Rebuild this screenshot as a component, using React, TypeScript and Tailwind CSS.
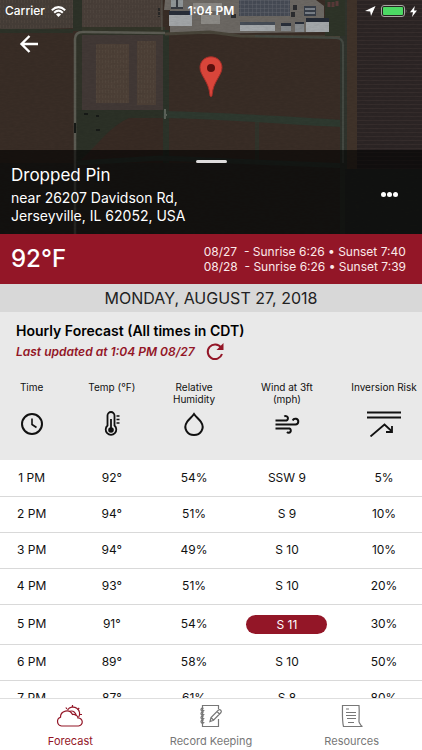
import type { ReactNode } from "react";

type Hour = {
  time: string;
  temp: string;
  humidity: string;
  wind: string;
  risk: string;
  alert?: boolean;
};

const hours: Hour[] = [
  { time: "1 PM", temp: "92°", humidity: "54%", wind: "SSW 9", risk: "5%" },
  { time: "2 PM", temp: "94°", humidity: "51%", wind: "S 9", risk: "10%" },
  { time: "3 PM", temp: "94°", humidity: "49%", wind: "S 10", risk: "10%" },
  { time: "4 PM", temp: "93°", humidity: "51%", wind: "S 10", risk: "20%" },
  { time: "5 PM", temp: "91°", humidity: "54%", wind: "S 11", risk: "30%", alert: true },
  { time: "6 PM", temp: "89°", humidity: "58%", wind: "S 10", risk: "50%" },
  { time: "7 PM", temp: "87°", humidity: "61%", wind: "S 8", risk: "80%" },
];

function FieldMap() {
  return (
    <svg
      className="absolute inset-0 h-full w-full"
      viewBox="0 0 422 234"
      preserveAspectRatio="xMidYMid slice"
      aria-hidden="true"
    >
      <defs>
        <pattern id="rows" width="8" height="4" patternUnits="userSpaceOnUse">
          <path d="M0 .5H8" stroke="#463b38" strokeWidth="1" opacity=".35" />
        </pattern>
        <pattern id="stubble" width="3" height="5" patternUnits="userSpaceOnUse">
          <path d="M.5 0V3" stroke="#5b5048" strokeWidth="1" opacity=".3" />
        </pattern>
        <pattern id="roof" width="4" height="4" patternUnits="userSpaceOnUse">
          <path d="M0 0H4M0 0V4" stroke="#60646b" strokeWidth="1" />
        </pattern>
        <filter id="grain" x="0" y="0" width="100%" height="100%">
          <feTurbulence type="fractalNoise" baseFrequency=".2 .6" numOctaves="3" seed="4" />
          <feColorMatrix values="0 0 0 0 0  0 0 0 0 0  0 0 0 0 0  .7 0 0 0 -.2" />
        </filter>
      </defs>
      <rect width="422" height="234" fill="#392d26" />
      <path d="M0 0H73V28L0 30Z" fill="#463e38" />
      <path d="M0 0H73V28L0 30Z" fill="url(#stubble)" />
      <path d="M73 0H82V31H73ZM0 29H73V33H0Z" fill="#2d3228" />
      <rect x="82" y="0" width="80" height="27" fill="#493f39" />
      <rect x="82" y="0" width="80" height="27" fill="url(#stubble)" />
      <path d="M82 27H165V33H82Z" fill="#333529" />
      <rect x="76" y="33" width="92" height="84" fill="#313329" />
      <rect x="82" y="35" width="81" height="76" fill="#423936" />
      <rect x="96" y="44" width="33" height="59" fill="#4d4037" />
      <rect x="137" y="41" width="19" height="64" fill="#4d4037" />
      <rect x="96" y="44" width="33" height="59" fill="url(#stubble)" />
      <rect x="137" y="41" width="19" height="64" fill="url(#stubble)" />
      <path d="M76 110H168V234H76Z" fill="#2c3127" />
      <path d="M91 150C105 136 112 126 129 118H163V163H78Z" fill="#382b24" />
      <path d="M163 30H169V234H163Z" fill="#2c3329" />
      <path d="M163 111C210 112 300 117 343 120V127C280 124 220 119 163 118Z" fill="#2e392f" />
      <path d="M255 122H259V234H255Z" fill="#31342b" />
      <path d="M0 163H422V234H0Z" fill="#302c27" />
      <path d="M77 163L160 158 422 169" fill="none" stroke="#303831" strokeWidth="5" />
      <path d="M340 0H348V234H340Z" fill="#30342d" />
      <rect x="347" width="10" height="234" fill="#40332a" />
      <rect x="357" width="65" height="234" fill="#2c2525" />
      <rect x="357" width="65" height="234" fill="url(#rows)" />
      <path d="M345 169H422V234H345Z" fill="#2b2d2a" />
      <path d="M165 0H316L324 6V32L170 34V10H164Z" fill="#6c6863" />
      <path d="M165 34L210 32 240 36 340 37" fill="none" stroke="#484439" strokeWidth="3" />
      <rect x="325" width="20" height="36" fill="#2e3428" />
      <path d="M329 2V7M333 2V7M337 1V6" stroke="#593a39" strokeWidth="3" />
      <rect x="171" y="0" width="12" height="8" fill="#8e9496" />
      <path d="M171 8H183M177 0V8" stroke="#373b42" strokeWidth="2" />
      <rect x="169" y="11" width="23" height="15" fill="#a3a6a8" />
      <path d="M169 11H192V15H169Z" fill="#292e39" />
      <rect x="239" y="-2" width="51" height="18" fill="#464b55" />
      <rect x="239" y="-2" width="51" height="18" fill="url(#roof)" />
      <rect x="193" y="3" width="29" height="8" fill="#8b8985" />
      <rect x="201" y="15" width="19" height="9" fill="#8d8b87" />
      <path d="M240 22H275V31H240Z" fill="#a3a7aa" />
      <path d="M240 22H275V25H240Z" fill="#464d57" />
      <path d="M281 23H291V31H281ZM295 22H304V32H295Z" fill="#84888b" />
      <path d="M281 23H291V26H281ZM295 22H304V24H295Z" fill="#292f3a" />
      <path d="M304 6H316V16H304Z" fill="#383e48" />
      <path d="M305 9H315M305 13H315" stroke="#90979d" strokeWidth="1.5" />
      <path d="M306 18H329V32H306Z" fill="#a3a7aa" />
      <path d="M306 18H329V22H306Z" fill="#252b36" />
      <path d="M231 14H236V18H231ZM293 5H297V10H293ZM291 12H295V17H291Z" fill="#2c2d30" />
      <path d="M75 234V39Q75 32 83 32L165 33" fill="none" stroke="#5c5c53" strokeWidth="2.5" />
      <path d="M162 0V30" stroke="#5a5951" strokeWidth="1" />
      <path d="M164 115H167M165 109V119" stroke="#5b6259" strokeWidth="2" />
      <path d="M255 36L336 38Q343 38 343 45V163" fill="none" stroke="#444942" strokeWidth="2" />
      <path d="M75 123V133M84 114H88M96 116H99M96 130H100" stroke="#171a17" strokeWidth="2" />
      <path d="M159 8V17" stroke="#292827" strokeWidth="2" strokeDasharray="3 1" />
      <rect width="422" height="234" filter="url(#grain)" opacity=".15" />
    </svg>
  );
}

function PinIcon() {
  return (
    <svg className="absolute top-14 left-1/2 h-[42px] w-6 -translate-x-1/2" viewBox="0 0 24 42" aria-hidden="true">
      <path
        d="M12 .8C5.800 .8 1 5.500 1 11.600C1 15.600 3 18.600 5.500 23C8.500 28.500 10.200 32 10.800 38.500C11 41.500 13 41.500 13.200 38.500C13.800 32 15.500 28.500 18.500 23C21 18.600 23 15.600 23 11.600C23 5.500 18.200 .8 12 .8Z"
        fill="#d8453a"
        stroke="#a52e28"
      />
      <circle cx="12" cy="12" r="4" fill="#5a100e" />
    </svg>
  );
}

function StatusBar() {
  return (
    <div className="grid h-[22px] grid-cols-3 items-center px-[5px] text-xs font-medium">
      <div className="flex items-center gap-[6px]">
        <span>Carrier</span>
        <svg className="h-[11px] w-[15px]" viewBox="0 0 15 11" aria-hidden="true">
          <g fill="none" stroke="currentColor" strokeWidth="2">
            <path d="M.8 4.200Q7.500-2 14.200 4.200" />
            <path d="M3.200 6.700Q7.500 2.600 11.800 6.700" />
          </g>
          <path d="M5 8.400Q7.500 6.200 10 8.400L7.500 11Z" fill="currentColor" />
        </svg>
      </div>
      <span className="text-center font-semibold">1:04 PM</span>
      <div className="flex items-center justify-end gap-[5px]">
        <svg className="h-[10px] w-[11px]" viewBox="0 0 11 10" aria-hidden="true">
          <path d="M10.500 0L6 10 5.200 5.400 0 5Z" fill="currentColor" />
        </svg>
        <svg className="h-3 w-[26px]" viewBox="0 0 26 12" aria-hidden="true">
          <rect x=".5" y=".5" width="23" height="11" rx="2.500" fill="#242420" stroke="#a5a5a0" />
          <rect x="2" y="2" width="20" height="8" rx="1" fill="#4cd964" />
          <path d="M24.800 4Q26 6 24.800 8Z" fill="#a5a5a0" />
        </svg>
        <svg className="-ml-[2px] h-[11px] w-[7px]" viewBox="0 0 7 11" aria-hidden="true">
          <path d="M4.800 0L0 6.200H3L2 11 7 4.600H4Z" fill="currentColor" />
        </svg>
      </div>
    </div>
  );
}

function ClockIcon() {
  return (
    <svg className="h-[26px] w-[26px]" viewBox="0 0 26 26" fill="none" stroke="currentColor" strokeWidth="2" aria-hidden="true">
      <circle cx="13" cy="13" r="10" />
      <path d="M13 7.500V13.500L17.500 16.500" strokeWidth="1.600" />
    </svg>
  );
}

function ThermometerIcon() {
  return (
    <svg className="h-[26px] w-[26px]" viewBox="0 0 26 26" fill="none" stroke="currentColor" strokeWidth="1.800" aria-hidden="true">
      <path d="M8.500 14.500V4.500A3.500 3.500 0 0 1 15.500 4.500V14.500A5.300 5.300 0 1 1 8.500 14.500Z" />
      <circle cx="12" cy="19" r="2.800" fill="currentColor" stroke="none" />
      <path d="M12 8V19" />
      <path d="M17.500 5H20.500M17.500 8.500H20.500M17.500 12H20.500" strokeWidth="1.600" />
    </svg>
  );
}

function DropIcon() {
  return (
    <svg className="h-[26px] w-[26px]" viewBox="0 0 26 26" fill="none" stroke="currentColor" strokeWidth="2" aria-hidden="true">
      <path d="M13 3C11 6 8 8 6 11C1.800 17.500 6.500 24 13 24S24.200 17.500 20 11C18 8 15 6 13 3Z" />
    </svg>
  );
}

function WindIcon() {
  return (
    <svg className="h-[26px] w-[26px]" viewBox="0 0 26 26" fill="none" stroke="currentColor" strokeWidth="2" aria-hidden="true">
      <path d="M1.500 9.500H12.500A2.300 2.300 0 1 0 10.300 5.500" />
      <path d="M1.500 13.500H21.500A2.900 2.900 0 1 0 18.700 9.500" />
      <path d="M1.500 17.500H15.500A2.200 2.200 0 1 1 13 21" />
    </svg>
  );
}

function InversionIcon() {
  return (
    <svg className="h-[26px] w-[34px]" viewBox="0 0 34 26" fill="none" stroke="currentColor" strokeWidth="1.800" aria-hidden="true">
      <path d="M0 1.500H34M0 6.500H34" />
      <path d="M3.500 25.500L17.500 13.500 24.500 20" />
      <path d="M25 15V21H19" />
    </svg>
  );
}

const columns: { label: string; icon: ReactNode; width: string }[] = [
  { label: "Time", icon: <ClockIcon />, width: "w-[15%]" },
  { label: "Temp (°F)", icon: <ThermometerIcon />, width: "w-[23%]" },
  { label: "Relative\nHumidity", icon: <DropIcon />, width: "w-[16%]" },
  { label: "Wind at 3ft\n(mph)", icon: <WindIcon />, width: "w-[28%]" },
  { label: "Inversion Risk", icon: <InversionIcon />, width: "w-[18%]" },
];

function ForecastIcon() {
  return (
    <svg className="h-6 w-7" viewBox="0 0 28 24" fill="none" stroke="currentColor" strokeWidth="1.200" aria-hidden="true">
      <path d="M5.500 22A4.500 4.500 0 0 1 4.500 13.300A6.300 6.300 0 0 1 16.500 10.500A4.500 4.500 0 0 1 22 14A4 4 0 0 1 22.500 22Z" />
      <path d="M11.500 6A6 6 0 0 1 22.500 13.500" />
      <path d="M14 7.300A4.500 4.500 0 0 1 20 11.800" />
      <path d="M16.500 1V3M9.800 3.500L11 5M23.200 4L21.800 5.500M26 10.500H24" />
    </svg>
  );
}

function NotebookIcon() {
  return (
    <svg className="h-6 w-7" viewBox="0 0 28 24" fill="none" stroke="currentColor" strokeWidth="1.200" aria-hidden="true">
      <path d="M21.500 5V1.500H5.500V22.500H21.500V15" />
      <path d="M6.500 4.500A1.500 1.500 0 1 0 7 6M6.500 8.500A1.500 1.500 0 1 0 7 10M6.500 12.500A1.500 1.500 0 1 0 7 14M6.500 16.500A1.500 1.500 0 1 0 7 18" strokeWidth="1.300" />
      <path d="M13 17.500L14 13.500 21.500 6A1.800 1.800 0 0 1 24 8.500L16.500 16.200ZM20 7.500L22.500 10M14 13.500L16.500 16.200" />
    </svg>
  );
}

function DocumentIcon() {
  return (
    <svg className="h-6 w-7" viewBox="0 0 28 24" fill="none" stroke="currentColor" strokeWidth="1.200" aria-hidden="true">
      <path d="M21 18C21 12 21.500 7 21 1.500H4.500C4.500 10 4 17 5.500 22.500H24.500C22.500 22 22 20 21 18" />
      <path d="M8 5H11M8 8.500H18M8 11.500H18M9 14.500H18M10 18.500H16" />
    </svg>
  );
}

const tabs = [
  { label: "Forecast", icon: <ForecastIcon />, active: true },
  { label: "Record Keeping", icon: <NotebookIcon />, active: false },
  { label: "Resources", icon: <DocumentIcon />, active: false },
];

export default function App() {
  return (
    <div className="flex h-screen flex-col bg-white font-['Inter','Liberation_Sans',sans-serif] text-[#111]">
      <header className="relative flex shrink-0 flex-col overflow-hidden text-white">
        <FieldMap />
        <PinIcon />
        <div className="relative pb-[90px]">
          <StatusBar />
          <div className="px-[13px] pt-[6px]">
            <button type="button" aria-label="Back" className="flex h-8 w-8 items-center justify-center">
              <svg className="h-5 w-5" viewBox="0 0 20 20" fill="none" stroke="currentColor" strokeWidth="2.400" aria-hidden="true">
                <path d="M10.500 2L2.500 10 10.500 18M2.500 10H19" />
              </svg>
            </button>
          </div>
        </div>
        <section className="relative flex flex-col bg-black/60 px-[11px] pt-[10px] pb-[9px]">
          <div className="h-[3px] w-[31px] self-center rounded-full bg-[#dedcdc]" />
          <div className="flex items-center justify-between">
            <div>
              <h1 className="text-[17px] leading-6">Dropped Pin</h1>
              <address className="pt-[2px] text-sm leading-[18px] not-italic">
                near 26207 Davidson Rd,
                <br />
                Jerseyville, IL 62052, USA
              </address>
            </div>
            <button type="button" aria-label="More options" className="flex h-8 w-11 items-center justify-center gap-px">
              <span className="h-[5px] w-[5px] rounded-full bg-white" />
              <span className="h-[5px] w-[5px] rounded-full bg-white" />
              <span className="h-[5px] w-[5px] rounded-full bg-white" />
            </button>
          </div>
        </section>
      </header>

      <section className="flex h-[50px] shrink-0 items-center justify-between bg-[#931627] pr-4 pl-[11px] text-white">
        <p className="text-2xl font-medium">92°F</p>
        <div className="text-xs leading-[15px] whitespace-pre text-[#fbe9ea]">
          <p>08/27  - Sunrise 6:26 • Sunset 7:40</p>
          <p>08/28  - Sunrise 6:26 • Sunset 7:39</p>
        </div>
      </section>

      <h2 className="shrink-0 bg-[#d8d8d8] text-center text-base leading-7 text-[#222]">MONDAY, AUGUST 27, 2018</h2>

      <main className="flex min-h-0 flex-1 flex-col">
        <section className="shrink-0 bg-[#e9e9e9] px-4 pt-2 pb-1">
          <h3 className="text-sm leading-[22px] font-semibold text-black">Hourly Forecast (All times in CDT)</h3>
          <div className="flex items-center gap-2">
            <p className="text-xs leading-5 font-semibold text-[#931627] italic">Last updated at 1:04 PM 08/27</p>
            <button type="button" aria-label="Refresh forecast" className="flex h-5 w-6 items-center justify-center text-[#931627]">
              <svg className="h-5 w-5" viewBox="0 0 20 20" fill="none" stroke="currentColor" strokeWidth="2" aria-hidden="true">
                <path d="M16 5.500A7.300 7.300 0 1 0 17 12" />
                <path d="M18.500 1V8H11.500Z" fill="currentColor" stroke="none" />
              </svg>
            </button>
          </div>
        </section>

        <div className="min-h-0 flex-1 overflow-y-auto [scrollbar-width:none]">
          <table className="w-full table-fixed border-collapse text-center">
            <thead className="bg-[#e9e9e9]">
              <tr>
                {columns.map((column) => (
                  <th key={column.label} scope="col" className={`${column.width} p-0 align-top font-normal`}>
                    <div className="flex h-[94px] flex-col items-center pt-[15px]">
                      <span className="h-[30px] text-[10px] leading-3 whitespace-pre">{column.label}</span>
                      {column.icon}
                    </div>
                  </th>
                ))}
              </tr>
            </thead>
            <tbody className="text-xs leading-5">
              {hours.map((hour) => (
                <tr key={hour.time} className={`border-b border-[#d9d9d9] ${hour.alert ? "h-10" : "h-9"}`}>
                  <td>{hour.time}</td>
                  <td>{hour.temp}</td>
                  <td>{hour.humidity}</td>
                  <td>
                    {hour.alert ? (
                      <span className="mx-auto block w-[81px] rounded-full bg-[#931627] leading-[19px] text-white">
                        {hour.wind}
                      </span>
                    ) : (
                      hour.wind
                    )}
                  </td>
                  <td>{hour.risk}</td>
                </tr>
              ))}
            </tbody>
          </table>
        </div>
      </main>

      <nav className="grid h-[52px] shrink-0 grid-cols-3 border-t border-[#dedede] bg-white">
        {tabs.map((tab) => (
          <a
            key={tab.label}
            href={`#${tab.label.toLowerCase().replace(" ", "-")}`}
            aria-current={tab.active ? "page" : undefined}
            className={`flex flex-col items-center gap-[5px] pt-[5px] text-[11px] leading-4 ${tab.active ? "text-[#931627]" : "text-[#777]"}`}
          >
            {tab.icon}
            {tab.label}
          </a>
        ))}
      </nav>
    </div>
  );
}
